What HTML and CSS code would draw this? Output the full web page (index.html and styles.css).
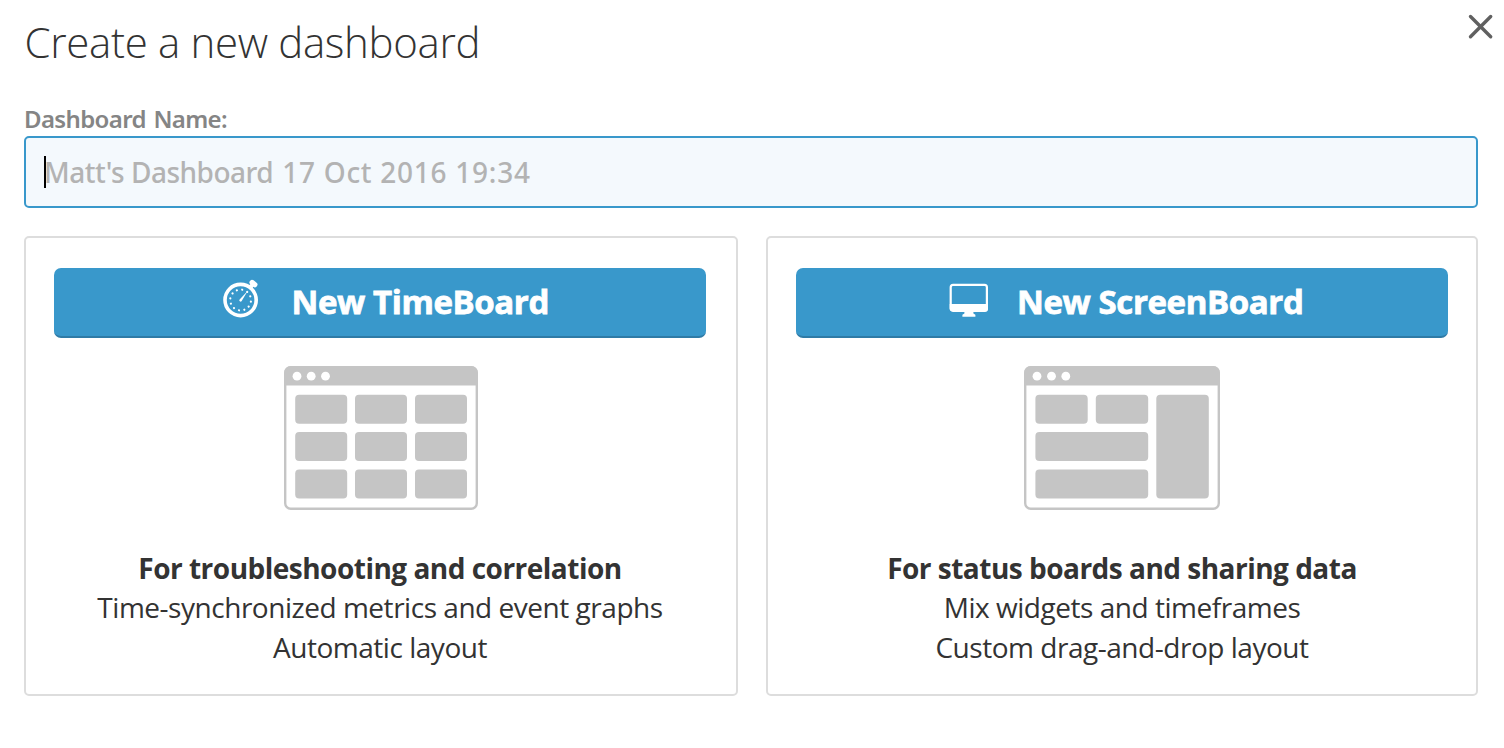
FILE: index.html
```html
<!DOCTYPE html>
<html lang="en">
<head>
<meta charset="utf-8">
<title>Create a new dashboard</title>
<link rel="stylesheet" href="styles.css">
</head>
<body>
<main class="dialog">
  <header class="dialog-header">
    <h1 class="title">Create a new dashboard</h1>
    <button class="close" aria-label="Close">
      <svg width="26" height="26" viewBox="0 0 26 26"><path d="M2.5 2.5 22.7 22.7M22.7 2.5 2.5 22.7" stroke="#606060" stroke-width="3.4" stroke-linecap="round"/></svg>
    </button>
  </header>
  <div class="label">Dashboard Name:</div>
  <div class="field" role="textbox">
    <span class="hint-name">Matt's Dashboard</span>
    <span class="hint-date">17 Oct 2016 19:34</span>
    <span class="caret"></span>
  </div>
  <div class="cards">
    <section class="card card-time">
      <button class="action">
        <svg class="icon-timer" width="40" height="40" viewBox="0 0 40 40">
          <circle cx="20.6" cy="22" r="15.6" fill="none" stroke="#fff" stroke-width="3.6"/>
          <g transform="translate(33.4 5.6) rotate(39)" fill="#fff"><rect x="-4.3" y="-2.7" width="8.6" height="5.2" rx="2.4"/><rect x="-2" y="1" width="4" height="5"/></g>
          <circle cx="20.6" cy="22" r="10.4" fill="none" stroke="#fff" stroke-width="2.2" stroke-linecap="round" pathLength="120" stroke-dasharray="0.01 9.99" transform="rotate(-21 20.6 22)"/>
          <path d="M27.8 12.8 19.6 21.4A1.3 1.3 0 0 0 21.7 23.1Z" fill="#fff"/>
        </svg>
        <span class="action-text">New TimeBoard</span>
      </button>
      <svg class="layout layout-time" width="194" height="144" viewBox="0 0 194 144">
        <rect x="1.2" y="1.2" width="191.6" height="141.6" rx="5.5" fill="#fff" stroke="#c5c5c5" stroke-width="2.4"/>
        <path d="M0 19.5V7a7 7 0 0 1 7-7h180a7 7 0 0 1 7 7v12.5z" fill="#c5c5c5"/>
        <g fill="#fff"><circle cx="13" cy="10.2" r="4.4"/><circle cx="27.2" cy="10.2" r="4.4"/><circle cx="41.5" cy="10.2" r="4.4"/></g>
        <g fill="#c5c5c5">
          <rect x="11.2" y="28.8" width="52" height="29" rx="4"/><rect x="71" y="28.8" width="52" height="29" rx="4"/><rect x="131" y="28.8" width="52" height="29" rx="4"/>
          <rect x="11.2" y="66.1" width="52" height="29" rx="4"/><rect x="71" y="66.1" width="52" height="29" rx="4"/><rect x="131" y="66.1" width="52" height="29" rx="4"/>
          <rect x="11.2" y="103.5" width="52" height="29" rx="4"/><rect x="71" y="103.5" width="52" height="29" rx="4"/><rect x="131" y="103.5" width="52" height="29" rx="4"/>
        </g>
      </svg>
      <div class="copy">
        <strong class="lead">For troubleshooting and correlation</strong>
        <span class="line">Time-synchronized metrics and event graphs</span>
        <span class="line">Automatic layout</span>
      </div>
    </section>
    <section class="card">
      <button class="action">
        <svg class="icon-screen" width="40" height="40" viewBox="0 0 40 40">
          <rect x="1.7" y="6.8" width="36.2" height="26" rx="2.4" fill="none" stroke="#fff" stroke-width="2.2"/>
          <path d="M.7 26H39v4.6a3 3 0 0 1-3 3H3.7a3 3 0 0 1-3-3z" fill="#fff"/>
          <path d="M15.4 33h9v2.6l2 1.1v2.1h-13v-2.1l2-1.1z" fill="#fff"/>
        </svg>
        <span class="action-text">New ScreenBoard</span>
      </button>
      <svg class="layout" width="196" height="144" viewBox="0 0 196 144">
        <rect x="1.2" y="1.2" width="193.6" height="141.6" rx="5.5" fill="#fff" stroke="#c5c5c5" stroke-width="2.4"/>
        <path d="M0 19.5V7a7 7 0 0 1 7-7h182a7 7 0 0 1 7 7v12.5z" fill="#c5c5c5"/>
        <g fill="#fff"><circle cx="13" cy="10.2" r="4.4"/><circle cx="27.5" cy="10.2" r="4.4"/><circle cx="41.8" cy="10.2" r="4.4"/></g>
        <g fill="#c5c5c5">
          <rect x="11.4" y="28.8" width="52.3" height="29" rx="4"/><rect x="71.8" y="28.8" width="52.4" height="29" rx="4"/>
          <rect x="11.4" y="66.1" width="112.8" height="29" rx="4"/><rect x="11.4" y="103.5" width="112.8" height="29" rx="4"/>
          <rect x="132.3" y="28.8" width="52.5" height="103.7" rx="4"/>
        </g>
      </svg>
      <div class="copy">
        <strong class="lead">For status boards and sharing data</strong>
        <span class="line">Mix widgets and timeframes</span>
        <span class="line">Custom drag-and-drop layout</span>
      </div>
    </section>
  </div>
</main>
</body>
</html>
```
FILE: styles.css
```css
* { box-sizing: border-box; }
body { margin: 0; background: #fff; color: #333; font-family: "Open Sans", sans-serif; }
button { border: 0; padding: 0; font: inherit; cursor: pointer; }
svg { display: block; flex: none; }
.dialog { height: 748px; padding: 14px 26px 52px 24px; white-space: nowrap; }
.dialog-header { display: flex; justify-content: space-between; height: 91px; }
.title { margin: -1px 0 0 0.5px; font-size: 42px; font-weight: 300; line-height: 58px; letter-spacing: -0.33px; }
.close { width: 26px; height: 26px; margin-right: -16px; background: none; }
.label { height: 31px; color: #858585; font-family: "Noto Sans", sans-serif; font-size: 24px; font-weight: 600; line-height: 28px; letter-spacing: -0.64px; word-spacing: 2px; }
.field { position: relative; display: flex; align-items: center; gap: 9px; height: 72px; padding: 0 18px; border: 2px solid #3998cb; border-radius: 5px; background: #f4f9fd; color: #b3b3b3; font-family: "Noto Sans", sans-serif; font-size: 28px; font-weight: 500; }
.hint-name { letter-spacing: -0.5px; }
.hint-date { letter-spacing: 0.73px; }
.caret { position: absolute; left: 18px; top: 18px; width: 2px; height: 32px; background: #000; }
.cards { display: grid; grid-template-columns: 714px 712px; gap: 28px; margin-top: 28px; }
.card { display: flex; flex-direction: column; align-items: center; height: 460px; padding: 30px 28px 0; border: 2px solid #ddd; border-radius: 5px; }
.card-time { padding-right: 30px; }
.action { display: flex; align-items: flex-start; width: 652px; height: 70px; padding-top: 10px; border-bottom: 2px solid #2f7ba6; border-radius: 7px; background: #3998cb; color: #fff; font-size: 33px; font-weight: 700; line-height: 48px; letter-spacing: -0.4px; }
.action-text { -webkit-text-stroke: 0.8px #fff; }
.icon-timer { margin: 0 31.5px 0 166px; }
.icon-screen { margin: 0 28px 0 153px; }
.layout { margin-top: 28px; }
.layout-time { margin-left: 2px; }
.copy { display: flex; flex-direction: column; align-items: center; margin-top: 38px; font-size: 28px; line-height: 40px; letter-spacing: -0.47px; }
.lead { height: 39px; font-weight: 700; letter-spacing: -0.51px; }
```
